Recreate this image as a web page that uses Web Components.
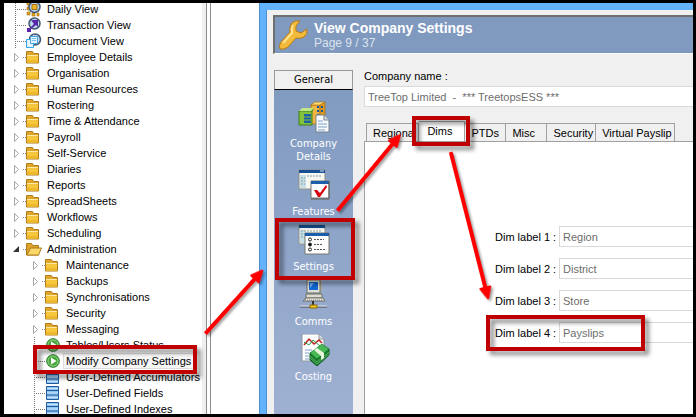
<!DOCTYPE html>
<html lang="en">
<head>
<meta charset="utf-8">
<title>View Company Settings</title>
<style>
  html, body { height: 100%; }
  body {
    margin: 0;
    overflow: hidden;
    background: #fff;
    color: #000;
    font: 11px/16px "Liberation Sans", Arial, sans-serif;
  }
</style>
</head>
<body>

<app-shell>
  <tree-view slot="tree">
    <tree-item icon="daily" lines>Daily View</tree-item>
    <tree-item icon="transaction" lines>Transaction View</tree-item>
    <tree-item icon="document" lines>Document View</tree-item>
    <tree-item icon="folder" closed>Employee Details</tree-item>
    <tree-item icon="folder" closed>Organisation</tree-item>
    <tree-item icon="folder" closed>Human Resources</tree-item>
    <tree-item icon="folder" closed>Rostering</tree-item>
    <tree-item icon="folder" closed>Time &amp; Attendance</tree-item>
    <tree-item icon="folder" closed>Payroll</tree-item>
    <tree-item icon="folder" closed>Self-Service</tree-item>
    <tree-item icon="folder" closed>Diaries</tree-item>
    <tree-item icon="folder" closed>Reports</tree-item>
    <tree-item icon="folder" closed>SpreadSheets</tree-item>
    <tree-item icon="folder" closed>Workflows</tree-item>
    <tree-item icon="folder" closed>Scheduling</tree-item>
    <tree-item icon="open" opened>Administration</tree-item>
    <tree-item icon="folder" closed child>Maintenance</tree-item>
    <tree-item icon="folder" closed child>Backups</tree-item>
    <tree-item icon="folder" closed child>Synchronisations</tree-item>
    <tree-item icon="folder" closed child>Security</tree-item>
    <tree-item icon="folder" closed child>Messaging</tree-item>
    <tree-item icon="run" lines child>Tables/Users Status</tree-item>
    <tree-item icon="run" lines child selected>Modify Company Settings</tree-item>
    <tree-item icon="table" lines child>User-Defined Accumulators</tree-item>
    <tree-item icon="table" lines child>User-Defined Fields</tree-item>
    <tree-item icon="table" lines child>User-Defined Indexes</tree-item>
  </tree-view>

  <settings-window heading="View Company Settings" page="Page 9 / 37">
    <side-nav slot="nav" heading="General">
      <nav-item icon="company">Company<br>Details</nav-item>
      <nav-item icon="features">Features</nav-item>
      <nav-item icon="settings">Settings</nav-item>
      <nav-item icon="comms">Comms</nav-item>
      <nav-item icon="costing">Costing</nav-item>
    </side-nav>
    <text-field stacked label="Company name :" value="TreeTop Limited  -  *** TreetopsESS ***"></text-field>
    <tab-panel tabs="Regional,Dims,PTDs,Misc,Security,Virtual Payslip" active="Dims">
      <text-field label="Dim label 1 :" value="Region"></text-field>
      <text-field label="Dim label 2 :" value="District"></text-field>
      <text-field label="Dim label 3 :" value="Store"></text-field>
      <text-field label="Dim label 4 :" value="Payslips"></text-field>
    </tab-panel>
  </settings-window>

  <callout-layer slot="notes"></callout-layer>
</app-shell>

<script>
const ICONS = {
  daily: `<g fill="#e8a51c" stroke="#9a6a10" stroke-width=".6"><path d="M1 1h3v3H1zM1 6h3v3H1zM1 11h3v3H1zM6 12h3v3H6zM11 12h2v3h-2z"/></g>
    <circle cx="8.500" cy="6" r="5.500" fill="#b9d6ef" stroke="#44576e" stroke-width="1.500"/><path d="M6 3.500h5v5H6z" fill="#f3b629" stroke="#a06e10"/>`,
  transaction: `<circle cx="8.500" cy="6.500" r="5.500" fill="#b9d6ef" stroke="#44576e" stroke-width="1.500"/>
    <path d="M5 3h7v7l-2-2-5 4v3H1v-4h3l4-4z" fill="#5a25a8"/>`,
  document: `<circle cx="9" cy="6.500" r="5.500" fill="#b9d6ef" stroke="#44576e" stroke-width="1.500"/>
    <path d="M.5 6.500h7v8h-7z" fill="#e8f6ff" stroke="#35a6ee"/><path d="M4.500 3.500h7v7h-7z" fill="#e3f3ff" stroke="#4aa5e2"/><path d="M6 5.500h4M6 7.500h4" stroke="#7cc0f0"/>`,
  folder: `<path d="M.5 14V2.500h6l1 2h5V14z" fill="#e0a62b" stroke="#b07d1c"/><path d="M1 6h11v7.500H1z" fill="#f6c63c"/><path d="M1 6.500h11" stroke="#ffe9a0"/><path d="M1 11h11v2.500H1z" fill="#efb72c"/>`,
  open: `<path d="M.5 14V2.500h5l1 2h6V14z" fill="#dca22a" stroke="#b07d1c"/><path d="M1 14 4.500 7h11L12.500 14z" fill="#fad768" stroke="#b07d1c"/>`,
  run: `<circle cx="8" cy="8" r="6.300" fill="#45a63a" stroke="#27802a"/><circle cx="8" cy="8" r="5" fill="none" stroke="#9bd68c"/><path d="M6 4.500 11.500 8 6 11.500z" fill="#fff"/>`,
  table: `<path d="M1.500 1.500h12v13h-12z" fill="#8fc3f3" stroke="#1f5c9c"/><path d="M2 3.500h11M2 8h11M2 12.500h11" stroke="#c8e4fc"/><path d="M1 5.500h13M1 10h13" stroke="#1f5c9c"/>`,
  company: `<path d="M13 4 17 1h10v20H14z" fill="#c98512"/><path d="M13 4h9v19h-9z" fill="#efb441" stroke="#a66a08" stroke-width=".7"/><path d="M22 4 27 1v20l-5 2z" fill="#dc9a22" stroke="#a66a08" stroke-width=".7"/><path d="M13 4 17 1h10l-5 3z" fill="#ffd978" stroke="#a66a08" stroke-width=".6"/>
    <path d="M19 5h2v2h-2zM23 5h2v2h-2zM19 9h2v2h-2zM23 9h2v2h-2zM19 13h2v2h-2z" fill="#15539b"/>
    <path d="M1 10l3-2h12l-2 3v13H1z" fill="#4d991d"/><path d="M1 10h13v14H1z" fill="#83c03c" stroke="#3d8016"/><path d="M6 13h7v9H6z" fill="#1c61a4"/><path d="M6 16h7M6 19h7" stroke="#83c03c"/><path d="M1 10l3-3h12l-3 3z" fill="#c0e58b"/>
    <path d="M18 14h8l5 5v12H18z" fill="#f7faff" stroke="#77818e"/><path d="M26 14v5h5" fill="#d5dce6" stroke="#77818e"/><path d="M20 20h5M20 23h9M20 26h9M20 29h7" stroke="#7d9fc8"/>`,
  features: `<path d="M1 1h26v19H1z" fill="#f7f7f2" stroke="#8f8f87"/><path d="M1 1h26v3H1z" fill="#164f93"/><path d="M22 2h4" stroke="#d8e7fa"/><path d="M2 6h6v13H2z" fill="#c4e0e4"/><path d="M9 7h15M3 9h4M3 12h4M3 15h4" stroke="#8a9aa5" stroke-dasharray="2 1"/>
    <path d="M13 12h18v17H13z" fill="#fff" stroke="#77776f"/><path d="M13 12h18v3H13z" fill="#1c5eac"/><path d="M31 12v18H13" stroke="#605f58" fill="none"/><path d="M16 21h3l3 3 6-8 1 2-7 10-2 0z" fill="#d9000e"/>`,
  settings: `<path d="M1 1h26v19H1z" fill="#f7f7f2" stroke="#8f8f87"/><path d="M1 1h26v3H1z" fill="#164f93"/><path d="M2 6h5v13H2z" fill="#c4e0e4"/><path d="M3 7h21M3 10h4M3 13h4" stroke="#8a9aa5" stroke-dasharray="2 1"/>
    <path d="M7 9h24v21H7z" fill="#fff" stroke="#77776f"/><path d="M7 9h24v3H7z" fill="#1c5eac"/><g fill="#fff" stroke="#222"><circle cx="12" cy="15.500" r="1.500"/><circle cx="12" cy="20.500" r="1.500" fill="#000"/><circle cx="12" cy="25.500" r="1.500"/></g>
    <path d="M16 15.500h10M16 20.500h8M16 25.500h12" stroke="#555" stroke-dasharray="2 1"/>`,
  comms: `<path d="M9 1 11 0h13v12l-2 2H9z" fill="#a8a89e"/><path d="M9 1h13v13H9z" fill="#e0dfd5" stroke="#6c6c65"/><path d="M11 3h9v8h-9z" fill="#1168d2"/><path d="M12 4h4l-4 5z" fill="#74b4fa"/>
    <path d="M8 15h16v4H8z" fill="#dddcd2" stroke="#6c6c65"/><path d="M8 19h17l2 3H5z" fill="#efeee5" stroke="#6c6c65"/><path d="M7 21h18" stroke="#777" stroke-dasharray="1 1"/>
    <path d="M15 22v5" stroke="#333" stroke-width="2"/><path d="M2 28h27" stroke="#40454a"/><path d="M2 27h27" stroke="#e0e3e7"/><path d="M12 26h7v3h-7z" fill="#f7c51c" stroke="#8a6b07"/>`,
  costing: `<path d="M4 0h17l5 5v22H4z" fill="#fff" stroke="#8d949c"/><path d="M21 0v5h5" fill="#d6dde4" stroke="#8d949c"/><path d="M6 11l5-6 5 5 5-4 3 3" stroke="#c11a1a" stroke-width="1.500" fill="none"/><path d="M6 8l5 3 4-5 7 6" stroke="#2b9b51" fill="none"/><path d="M7 16h7M7 19h4M7 22h4M7 25h4" stroke="#7d9fc8"/>
    <path d="M12 19v7l7 6 12-11v-6z" fill="#16782b" stroke="#0e5a1e"/><path d="M12 19 24 10l7 5-12 10z" fill="#48b955" stroke="#167a2a" stroke-width=".7"/><path d="M12 22l7 6 12-10M12 24l7 6 12-10" stroke="#7ccf80" stroke-width=".7" fill="none"/><path d="M16 16l3-2 7 5v5l-3 2v-4z" fill="#eaf4dd"/>`,
  wrench: `<path d="M14 4Q17 1 22 2L18 7V12L23 14 29 10Q30 15 26 18 22 20 18 19L10 28Q6 31 2 30 0 27 3 23L12 13Q11 8 14 4Z" fill="#f3ba3b" stroke="#b67a18"/><path d="M15 6Q13 10 14 14L5 24" fill="none" stroke="#ffe391" stroke-width="2"/>`
};

const icon = (name, size) =>
  `<svg width="${size}" height="${size}" viewBox="0 0 ${size} ${size}" aria-hidden="true">${ICONS[name]}</svg>`;

class BaseElement extends HTMLElement {
  connectedCallback() {
    if (!this.shadowRoot) {
      this.attachShadow({mode: 'open'}).innerHTML = this.render();
    }
  }
}

class AppShell extends BaseElement {
  render() {
    return `
      <style>
        :host { display: flex; position: relative; height: 100%; overflow: hidden; }
        .tree { flex: none; width: 202px; overflow: hidden; }
        .splitter { flex: none; width: 4px; background: #f0f0f0; border-right: 1px solid #8c8c8c; }
        .gap { flex: none; box-sizing: border-box; width: 50px; border-left: 1px solid #8c8c8c; margin-left: 3px; }
        main { flex: 1; min-width: 0; display: flex; }
        .frame { position: absolute; inset: 0; border: 3px solid #000; border-left-width: 4px; pointer-events: none; }
      </style>
      <div class="tree"><slot name="tree"></slot></div>
      <div class="splitter"></div>
      <div class="gap"></div>
      <main><slot></slot></main>
      <slot name="notes"></slot>
      <div class="frame"></div>`;
  }
}

class TreeView extends BaseElement {
  connectedCallback() {
    super.connectedCallback();
    this.setAttribute('role', 'tree');
  }
  render() {
    return `<style>:host { display: flex; flex-direction: column; padding-top: 1px; }</style><slot></slot>`;
  }
}

class TreeItem extends BaseElement {
  connectedCallback() {
    super.connectedCallback();
    this.setAttribute('role', 'treeitem');
  }
  render() {
    let mark = '';
    if (this.hasAttribute('closed')) {
      mark = '<path d="M2.500 4.500v8l4-4z" fill="#fff" stroke="#a6a6a6"/><path d="M11 8.500h3" stroke="#888" stroke-dasharray="1 1"/>';
    } else if (this.hasAttribute('opened')) {
      mark = '<path d="M7 5v6H1z" fill="#333"/><path d="M11 8.500h3" stroke="#888" stroke-dasharray="1 1"/>';
    } else {
      mark = '<path d="M3.500 0v16M5 8.500h9" stroke="#777" stroke-dasharray="1 1"/>';
    }
    return `
      <style>
        :host { display: flex; height: 16px; padding-left: 12px; white-space: nowrap; }
        :host([child]) { padding-left: 31px; }
        svg { flex: none; display: block; }
        .text { padding: 0 3px; margin-left: 2px; }
        :host([selected]) .text { background: #f6f6f6; box-shadow: inset 0 0 0 1px #dcdcdc; }
      </style>
      <svg width="14" height="16" viewBox="0 0 14 16" aria-hidden="true">${mark}</svg>
      ${icon(this.getAttribute('icon'), 16)}
      <span class="text"><slot></slot></span>`;
  }
}

class SettingsWindow extends BaseElement {
  render() {
    return `
      <style>
        :host {
          flex: 1; min-width: 0; display: flex; flex-direction: column; box-sizing: border-box;
          background: #f0f0f0; border: solid #63b2fd; border-width: 10px 0 0 6px;
          box-shadow: inset 1px 0 #4a8fd0, -1px 0 #4a8fd0;
          padding: 5px 0 0 7px;
        }
        header {
          display: flex; align-items: center; gap: 4px; height: 36px; padding-left: 3px;
          background: #7f99bf; border: solid #6f6f6f; border-width: 2px 0 0 2px; border-bottom: 1px solid #fff;
          color: #dbe3ee;
        }
        h1 { margin: 0; font: bold 14px/16px "Liberation Sans", Arial, sans-serif; color: #fff; }
        p { margin: 0; font-size: 12px; line-height: 15px; }
        .body { flex: 1; min-height: 0; display: flex; gap: 11px; padding: 16px 0 0 1px; }
        .content { flex: 1; min-width: 0; display: flex; flex-direction: column; gap: 14px; }
      </style>
      <header>
        ${icon('wrench', 32)}
        <div><h1>${this.getAttribute('heading')}</h1><p>${this.getAttribute('page')}</p></div>
      </header>
      <div class="body">
        <slot name="nav"></slot>
        <div class="content"><slot></slot></div>
      </div>`;
  }
}

class SideNav extends BaseElement {
  render() {
    return `
      <style>
        :host {
          flex: none; width: 79px; display: flex; flex-direction: column;
          background: linear-gradient(#7f99bf, #9fb1d2);
          font: 11px/13px "DejaVu Sans Condensed", "Noto Sans", sans-serif;
        }
        h2 {
          margin: 0; text-align: center; font-size: 11px; font-weight: normal; line-height: 18px;
          background: #f0f0f0; border: 1px solid #999; border-bottom-color: #000;
        }
        nav { display: flex; flex-direction: column; gap: 6px; padding-top: 11px; }
      </style>
      <h2>${this.getAttribute('heading')}</h2>
      <nav><slot></slot></nav>`;
  }
}

class NavItem extends BaseElement {
  render() {
    return `
      <style>
        :host { display: block; }
        button {
          display: flex; flex-direction: column; align-items: center; gap: 4px; width: 100%;
          padding: 0; border: 0; background: none; color: #fff; font: inherit;
        }
      </style>
      <button type="button">${icon(this.getAttribute('icon'), 32)}<span><slot></slot></span></button>`;
  }
}

class TextField extends BaseElement {
  render() {
    return `
      <style>
        :host { display: flex; align-items: center; gap: 6px; }
        :host([stacked]) { flex-direction: column; align-items: stretch; gap: 4px; }
        label { flex: none; width: 58px; white-space: nowrap; }
        :host([stacked]) label { width: auto; line-height: 12px; }
        input {
          flex: 1; min-width: 0; box-sizing: border-box; height: 21px; padding: 0 3px;
          border: 1px solid #d9d9d9; border-right: 0; border-radius: 0; background: #fff;
          color: #6d6d6d; font: inherit;
        }
        :host([stacked]) input { flex: none; }
      </style>
      <label for="box">${this.getAttribute('label')}</label>
      <input id="box" type="text" readonly value="${this.getAttribute('value')}">`;
  }
}

class TabPanel extends BaseElement {
  render() {
    const active = this.getAttribute('active');
    const tabs = this.getAttribute('tabs').split(',').map(name =>
      `<button type="button" role="tab" aria-selected="${name === active}">${name}</button>`).join('');
    return `
      <style>
        :host { flex: 1; min-height: 0; display: flex; flex-direction: column; }
        .tabs { display: flex; align-items: flex-end; padding-left: 2px; height: 20px; }
        button {
          box-sizing: border-box; min-width: 41px; height: 18px; padding: 0 2px 0 6px; text-align: left;
          border: 1px solid #a0a0a0; border-width: 1px 1px 0 1px; background: #f0f0f0;
          font: inherit; white-space: nowrap;
        }
        button + button { border-left-width: 0; }
        button[aria-selected="true"] { height: 20px; min-width: 46px; padding-left: 8px; padding-bottom: 2px; background: #fff; }
        .panel {
          flex: 1; display: flex; flex-direction: column; gap: 11px; padding: 84px 0 0 130px;
          border: solid #a0a0a0; border-width: 1px 0 0 1px; background: #fff;
        }
      </style>
      <div class="tabs" role="tablist">${tabs}</div>
      <div class="panel" role="tabpanel"><slot></slot></div>`;
  }
}

// Boxes and arrows drawn over the window
class CalloutLayer extends BaseElement {
  render() {
    const boxes = [[33, 345, 164, 29], [412, 116, 58, 30], [275, 218, 80, 62], [486, 315, 159, 36]];
    const arrows = [[206, 333, 262, 271], [338, 210, 400, 135], [451, 153, 488, 298]];
    const rects = boxes.map(([x, y, w, h]) =>
      `<rect x="${x + 2}" y="${y + 2}" width="${w - 4}" height="${h - 4}" fill="none" stroke="#c00000" stroke-width="4"/>`).join('');
    const lines = arrows.map(([x1, y1, x2, y2]) => {
      const len = Math.round(Math.hypot(x2 - x1, y2 - y1));
      const angle = Math.atan2(y2 - y1, x2 - x1) * 180 / Math.PI;
      return `<path transform="translate(${x1} ${y1}) rotate(${angle})"
        d="M0 -1H${len - 11}V-5L${len} 0L${len - 11} 5V1H0z" fill="#f00" stroke="#f00" stroke-width="2" stroke-linejoin="round"/>`;
    }).join('');
    return `
      <style>
        :host { position: absolute; inset: 0; pointer-events: none; }
        svg { display: block; width: 100%; height: 100%; }
        g { filter: drop-shadow(4px 4px 2px rgba(0, 0, 0, .45)); }
        .arrows { filter: drop-shadow(2px 2px 1px rgba(0, 0, 0, .35)); }
      </style>
      <svg aria-hidden="true"><g>${rects}</g><g class="arrows">${lines}</g></svg>`;
  }
}

customElements.define('app-shell', AppShell);
customElements.define('tree-view', TreeView);
customElements.define('tree-item', TreeItem);
customElements.define('settings-window', SettingsWindow);
customElements.define('side-nav', SideNav);
customElements.define('nav-item', NavItem);
customElements.define('text-field', TextField);
customElements.define('tab-panel', TabPanel);
customElements.define('callout-layer', CalloutLayer);
</script>
</body>
</html>
